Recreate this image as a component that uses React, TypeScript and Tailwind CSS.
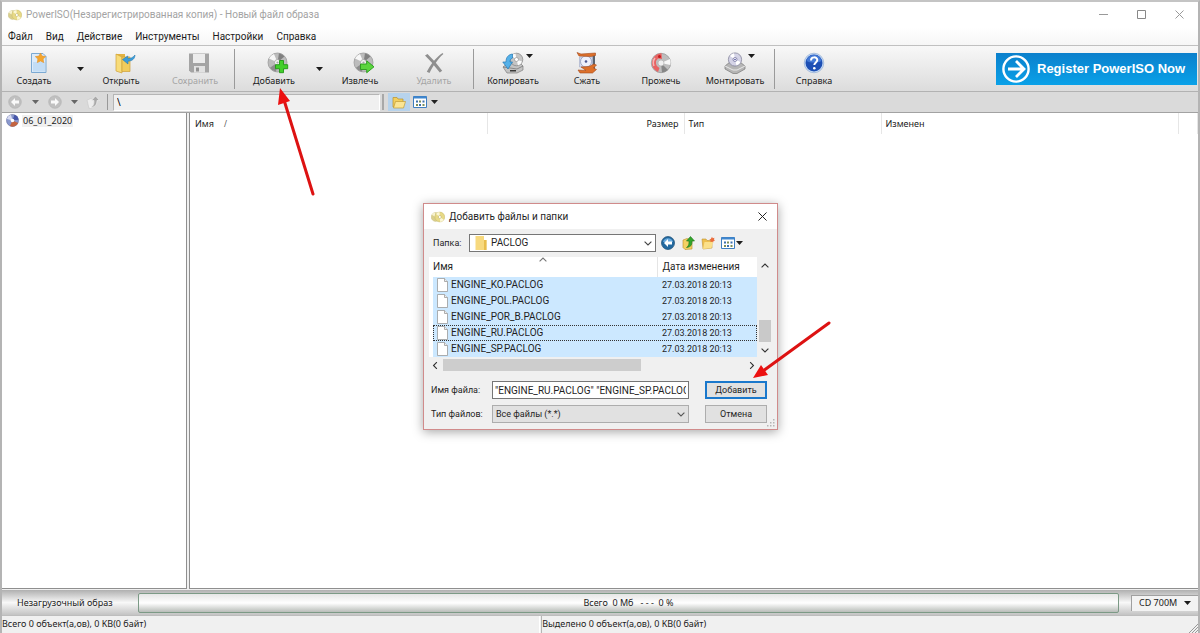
import React from 'react';

const menuItems = ['Файл', 'Вид', 'Действие', 'Инструменты', 'Настройки', 'Справка'];

const files = [
  'ENGINE_KO.PACLOG',
  'ENGINE_POL.PACLOG',
  'ENGINE_POR_B.PACLOG',
  'ENGINE_RU.PACLOG',
  'ENGINE_SP.PACLOG',
];

const Caret: React.FC = () => (
  <svg viewBox="0 0 7 4" className="w-[7px] h-1 shrink-0"><path d="M0 0h7L3.5 4z" fill="currentColor" /></svg>
);

const Chevron: React.FC<{ className?: string }> = ({ className = '' }) => (
  <svg viewBox="0 0 8 5" className={`w-2 h-[5px] shrink-0 ${className}`}>
    <path d="M.6.6 4 4 7.4.6" fill="none" stroke="currentColor" strokeWidth="1.1" />
  </svg>
);

const AppLogo: React.FC = () => (
  <svg viewBox="0 0 14 12" className="w-3.5 h-3 shrink-0">
    <circle cx="4.6" cy="6" r="4.4" fill="#d9cf8c" stroke="#c9be80" strokeWidth=".5" />
    <path d="M4.600 6 .8 3.800A4.400 4.400 0 0 1 4 1.600z" fill="#f7f2cf" />
    <circle cx="8.8" cy="6" r="4.9" fill="#e8da86" stroke="#c4b768" strokeWidth=".5" />
    <path d="M8.8 6 5 3A4.9 4.9 0 0 1 8.5 1.1zM8.8 6l4 2.8a4.9 4.9 0 0 1-3.6 2.1z" fill="#fbf7d6" />
    <circle cx="8.8" cy="6" r="1.5" fill="#fff" stroke="#b5a75a" strokeWidth=".5" />
  </svg>
);

const Disc: React.FC<{ children?: React.ReactNode }> = ({ children }) => (
  <svg viewBox="0 0 22 22" className="w-[22px] h-[22px]">
    <circle cx="10.5" cy="10.5" r="9.5" fill="#bcbcbc" stroke="#9a9a9a" strokeWidth=".8" />
    <path d="M10.5 10.5 2 6.5A9.3 9.3 0 0 1 7 1.9zM10.5 10.5 19 14a9.3 9.3 0 0 1-5 5z" fill="#f7f7f7" />
    <path d="M10.5 10.5 12 1.3a9.3 9.3 0 0 1 5.4 3.3z" fill="#808080" />
    <path d="M10.5 10.5 9 19.7a9.3 9.3 0 0 1-6-4z" fill="#8c8c8c" />
    <circle cx="10.5" cy="10.5" r="3" fill="#f4f4f4" stroke="#929292" strokeWidth=".6" />
    <circle cx="10.5" cy="10.5" r="1.1" fill="#aaa" />
    {children}
  </svg>
);

const icons: Record<string, React.ReactNode> = {
  create: (
    <svg viewBox="0 0 22 22" className="w-[22px] h-[22px]">
      <path d="M4.5 1.5H16l3 3v16H4.5z" fill="#dcebfa" stroke="#7ba9d2" />
      <path d="M6 10h12v9.500H6z" fill="#c3ddf5" />
      <path d="m13.500 1 1.600 3.100 3.600.5-2.600 2.500.6 3.500-3.200-1.600-3.200 1.600.6-3.500-2.600-2.500 3.600-.5z" fill="#f4a52d" stroke="#e0922a" strokeWidth=".6" />
    </svg>
  ),
  open: (
    <svg viewBox="0 0 22 22" className="w-[22px] h-[22px]">
      <path d="M2 2h9v17H2z" fill="#e3b341" />
      <path d="M2 2l6 3v16l-6-2z" fill="#f8dc79" stroke="#cfa03a" strokeWidth=".7" />
      <path d="M8 5h8v14.500H8z" fill="#f2cc5c" stroke="#cfa03a" strokeWidth=".7" />
      <path d="M21 3c-.2 4-3 6-7 6.200V12L8.500 7.500 13.800 4v2.500C17 6.600 19 5.500 21 3z" fill="#3b9ddb" stroke="#267aaf" strokeWidth=".6" />
    </svg>
  ),
  save: (
    <svg viewBox="0 0 22 22" className="w-[22px] h-[22px]">
      <path d="M1 1.500h20v19H3l-2-2z" fill="#a4a4a4" />
      <path d="M5 2h12v9H5z" fill="#ececec" />
      <path d="M6 14h11v6.500H6z" fill="#e2e2e2" />
      <path d="M8 15.500h3v4H8z" fill="#929292" />
    </svg>
  ),
  add: (
    <Disc>
      <path d="M12.500 8.500h4v4.200h4.200v4h-4.200v4h-4v-4H8.500v-4h4z" fill="#43cf2b" stroke="#229617" strokeWidth=".9" />
    </Disc>
  ),
  extract: (
    <Disc>
      <path d="M7.500 12h6.200V8.800l7.300 6-7.300 6V17.500H7.500z" fill="#5bd53e" stroke="#289a1c" strokeWidth=".9" />
    </Disc>
  ),
  remove: (
    <svg viewBox="0 0 22 22" className="w-[22px] h-[22px]">
      <path d="M2 3.500 4.500 2 11 8.800C13.500 5.800 16 3.500 19.500 1l.9 1c-3.200 2.800-5.500 5.500-7.600 8.700l6.400 8-2.400 1.800-6-7.300c-1.600 2.600-3 5-4.300 7.800l-2.700-1.200c1.600-3.200 3.300-6 5.400-8.700z" fill="#8f8f8f" />
    </svg>
  ),
  copy: (
    <svg viewBox="0 0 22 22" className="w-[22px] h-[22px]">
      <path d="m1 15 5-4h12l3 3v4l-6 3H5z" fill="#c3c3c3" stroke="#7e7e7e" strokeWidth=".7" />
      <path d="m1 15 14 2 6-3" fill="none" stroke="#6f6f6f" strokeWidth=".7" />
      <path d="M8 18h6v1.500H8z" fill="#3a3a3a" />
      <circle cx="14.500" cy="7.500" r="6.300" fill="#c4c4c4" stroke="#838383" strokeWidth=".7" />
      <path d="M14.500 7.500 9.500 4a6 6 0 0 1 4-2.600zM14.500 7.500l5.500 2a6 6 0 0 1-4 4z" fill="#fafafa" />
      <circle cx="14.500" cy="7.500" r="2" fill="#fff" stroke="#888" strokeWidth=".6" />
      <path d="M10.500 2C6 2.600 4 5.500 4 10H.8l5.200 7 4.500-7H8c0-2 .7-3.300 2.500-4z" fill="#54b0e8" stroke="#2479b4" strokeWidth=".7" />
    </svg>
  ),
  compress: (
    <svg viewBox="0 0 22 22" className="w-[22px] h-[22px]">
      <path d="M16.500 2h2.500v17h-2.500z" fill="#59636f" />
      <path d="M3.500 5h13v10h-13z" fill="#d3d9ef" stroke="#a0a8c4" strokeWidth=".6" />
      <circle cx="10" cy="9.500" r="5.500" fill="#eef1fc" stroke="#8790b0" strokeWidth=".7" />
      <circle cx="10" cy="9.500" r="1.300" fill="#4b5790" />
      <path d="m1 .500 4 1.500 14.500-1v2.500L15 4.500 3 4z" fill="#dc702b" stroke="#a54a1c" strokeWidth=".6" />
      <path d="m5 15 8-.5 5-2.500 2.500 1-3 3 3 1.500-4 3.500H4L2 18l8 .5z" fill="#dc702b" stroke="#a54a1c" strokeWidth=".6" />
    </svg>
  ),
  burn: (
    <svg viewBox="0 0 22 22" className="w-[22px] h-[22px]">
      <circle cx="11" cy="11" r="9.700" fill="#bdbdbd" stroke="#8f8f8f" strokeWidth=".7" />
      <path d="m11 11 9-4a9.500 9.500 0 0 1 .3 6z" fill="#f7f7f7" />
      <path d="m11 11 7 7a9.500 9.500 0 0 1-6 2.500z" fill="#868686" />
      <path d="M11 1.300A9.700 9.700 0 0 0 8 20l1.500-4A5.500 5.500 0 0 1 8 6.500l4 .5-.5-5.700z" fill="#e86363" />
      <path d="M5 6a8 8 0 0 0-1 8" fill="none" stroke="#f6b5b5" strokeWidth="1.500" />
      <circle cx="11" cy="11" r="3" fill="#efefef" stroke="#aaa" strokeWidth=".6" />
      <circle cx="9.500" cy="4.500" r="1.500" fill="#c21d1d" />
    </svg>
  ),
  mount: (
    <svg viewBox="0 0 22 22" className="w-[22px] h-[22px]">
      <path d="m1 14 5-4h10l5 4v3l-8 4.500h-4L1 17z" fill="#b5b5b5" stroke="#777" strokeWidth=".7" />
      <path d="m1 14 8 4h4l8-4" fill="none" stroke="#eee" strokeWidth=".9" />
      <circle cx="11" cy="7.500" r="6.600" fill="#d4d3e6" stroke="#85859a" strokeWidth=".8" />
      <path d="M11 7.500 6 4a6 6 0 0 1 4-2.700zM11 7.500l5.500 2.500a6 6 0 0 1-4 3.500z" fill="#fff" />
      <circle cx="11" cy="7.500" r="2" fill="#fff" stroke="#7373a0" strokeWidth=".8" />
      <circle cx="11" cy="7.500" r=".8" fill="#45459a" />
    </svg>
  ),
  help: (
    <svg viewBox="0 0 22 22" className="w-[22px] h-[22px]">
      <circle cx="11" cy="11" r="9.800" fill="#c8dcf5" stroke="#88a6d0" strokeWidth=".6" />
      <circle cx="11" cy="11" r="8.500" fill="#1d4fb4" />
      <path d="M3.500 9a7.700 7.700 0 0 1 15 0c-4 2-11 2-15 0z" fill="#4379d6" />
      <path d="M8 8.500c0-4.200 6.300-4 6.300-.4 0 2.400-3 2.400-3 5" fill="none" stroke="#fff" strokeWidth="2" />
      <circle cx="11.300" cy="16.200" r="1.300" fill="#fff" />
    </svg>
  ),
};

interface ToolProps {
  icon: string;
  label: string;
  width?: string;
  indent?: boolean;
  disabled?: boolean;
  menu?: boolean;
}

const Tool: React.FC<ToolProps> = ({ icon, label, width = 'w-[74px]', indent, disabled, menu }) => (
  <button
    type="button"
    disabled={disabled}
    className={`${width} shrink-0 flex flex-col items-center pt-1.5 ${disabled ? 'text-[#a5a5a5]' : 'text-[#1c1c1c]'}`}
  >
    <span className={`relative ${indent ? 'pl-2' : ''}`}>
      {icons[icon]}
      {menu && <span className="absolute left-6 top-0.5 flex"><Caret /></span>}
    </span>
    <span className="text-[9px] leading-3.5 whitespace-nowrap">{label}</span>
  </button>
);

const Separator: React.FC = () => <div className="w-px h-10 mx-0.5 bg-[#9a9a9a] self-center shrink-0" />;

const ViewIcon: React.FC = () => (
  <svg viewBox="0 0 14 12" className="w-3.5 h-3 shrink-0">
    <path d="M.5.500h13v11H.5z" fill="#fff" stroke="#3f7fc0" />
    <path d="M.5.500h13v2H.5z" fill="#3f87cf" />
    <g fill="#3b6fae"><path d="M3 4.500h2v2H3zM9.500 4.500h2v2h-2zM6 8h2v2H6z" /></g>
    <g fill="#7c8f58"><path d="M6 4.500h2v2H6zM3 8h2v2H3zM9.500 8h2v2h-2z" /></g>
  </svg>
);

const NavArrow: React.FC<{ flip?: boolean }> = ({ flip }) => (
  <svg viewBox="0 0 14 14" className={`w-3.5 h-3.5 ${flip ? 'rotate-180' : ''}`}>
    <circle cx="7" cy="7" r="6.300" fill="#c0c0c0" stroke="#b0b0b0" strokeWidth=".6" />
    <path d="M7 3 3 7l4 4V8.500h4v-3H7z" fill="#f9f9f9" />
  </svg>
);

const FileIcon: React.FC = () => (
  <svg viewBox="0 0 11 14" className="w-[11px] h-3.5 shrink-0">
    <path d="M.5.500h7l3 3v10H.5z" fill="#fff" stroke="#9a9a9a" strokeWidth=".8" />
    <path d="M7.500.500v3h3" fill="#eee" stroke="#9a9a9a" strokeWidth=".8" />
  </svg>
);

const AddDialog: React.FC = () => (
  <div
    role="dialog"
    aria-labelledby="dlg-title"
    className="absolute left-[421px] top-[201px] w-[355px] bg-[#f0f0f0] border border-[#d08b8b] shadow-[0_2px_10px_rgba(0,0,0,0.35)] font-['Roboto','Noto_Sans',sans-serif] text-[10px] leading-4 text-[#1f1f1f]"
  >
    <div className="h-[25px] bg-white flex items-center pl-[7px] pr-2">
      <AppLogo />
      <h2 id="dlg-title" className="ml-1 flex-1">Добавить файлы и папки</h2>
      <button type="button" aria-label="Закрыть" className="p-0.5">
        <svg viewBox="0 0 10 10" className="w-[9px] h-[9px]"><path d="m.5.500 9 9m0-9-9 9" stroke="#222" strokeWidth="1.100" /></svg>
      </button>
    </div>

    <div className="flex items-center h-7 pl-[9px]">
      <label htmlFor="folder" className="w-9 shrink-0 text-[9px]">Папка:</label>
      <div className="relative w-[187px]">
        <select id="folder" className="appearance-none block w-full h-[18px] pl-[21px] leading-4 bg-white border border-[#767676]">
          <option>PACLOG</option>
        </select>
        <svg viewBox="0 0 12 14" className="absolute left-1.5 top-0.5 w-3 h-3.5 pointer-events-none">
          <path d="M.5 0H9v4h2.500v10H.5z" fill="#f7d97e" />
          <path d="M9 4h2.500v10H9z" fill="#e8bd4c" />
        </svg>
        <Chevron className="absolute right-1 top-[7px] text-[#444] pointer-events-none" />
      </div>
      <div className="flex items-center gap-1.5 ml-[5px]">
        <button type="button" aria-label="Назад">
          <svg viewBox="0 0 14 14" className="w-3.5 h-3.5">
            <circle cx="7" cy="7" r="6.500" fill="#23699f" stroke="#174a74" strokeWidth=".7" />
            <path d="M2 6a5.200 5.200 0 0 1 10 0z" fill="#68aade" />
            <path d="M7 3 3 7l4 4V8.500h4v-3H7z" fill="#fff" />
          </svg>
        </button>
        <button type="button" aria-label="Вверх">
          <svg viewBox="0 0 14 14" className="w-3.5 h-3.5">
            <path d="m2 4 4-1.500 5 2V13l-7 .5-2-2z" fill="#f3d063" stroke="#b98f27" strokeWidth=".6" />
            <path d="M5.500 11.500C8 10 8 8 8 5H5.500L9.500.500l4 4.500H11c0 4-1 6-5.500 6.500z" fill="#32a52c" stroke="#1c7619" strokeWidth=".6" />
          </svg>
        </button>
        <button type="button" aria-label="Новая папка">
          <svg viewBox="0 0 14 14" className="w-3.5 h-3.5">
            <path d="M1 3h4l1 1.500h5V12l-9 1z" fill="#eebf4e" stroke="#bf9434" strokeWidth=".6" />
            <path d="M3.500 6H12l-1.500 6-8.500 1z" fill="#fbe08a" />
            <path d="m11 .8.8 1.400 1.600-.4-.4 1.600 1 1.100-1.500.6-.3 1.500-1.200-1-1.500.6.100-1.600-1.300-1 1.500-.6z" fill="#ea6c3b" />
          </svg>
        </button>
        <button type="button" aria-label="Вид" className="flex items-center gap-px"><ViewIcon /><Caret /></button>
      </div>
    </div>

    <div className="flex mx-[5px]">
      <div className="w-[328px] bg-white pl-1">
        <table className="w-full table-fixed border-collapse">
          <thead>
            <tr className="h-5">
              <th className="relative font-normal text-left border-r border-[#e5e5e5]">
                Имя
                <Chevron className="absolute left-[106px] top-0 rotate-180 text-[#777]" />
              </th>
              <th className="w-[100px] font-normal text-left pl-[5px]">Дата изменения</th>
            </tr>
          </thead>
          <tbody>
            {files.map(f => (
              <tr
                key={f}
                className={`h-4 bg-[#cce8ff] ${f === 'ENGINE_RU.PACLOG' ? 'outline-1 outline-dotted -outline-offset-1 outline-[#333]' : ''}`}
              >
                <td className="p-0"><div className="flex items-center gap-[3px] pl-1 h-4"><FileIcon />{f}</div></td>
                <td className="p-0 pl-[5px] text-[9px]">27.03.2018 20:13</td>
              </tr>
            ))}
          </tbody>
        </table>
      </div>
      <div className="w-[15px] flex flex-col items-center pt-1.5 pb-1">
        <Chevron className="rotate-180 text-[#333]" />
        <div className="mt-auto mb-1.5 w-3 h-[22px] bg-[#c9c9c9]" />
        <Chevron className="text-[#333]" />
      </div>
    </div>
    <div className="mx-[5px] h-4 flex items-center pl-0.5 pr-4">
      <Chevron className="rotate-90 text-[#333]" />
      <div className="ml-1 w-[198px] h-3 bg-[#cdcdcd]" />
      <Chevron className="ml-auto -rotate-90 text-[#333]" />
    </div>

    <div className="flex flex-col gap-1.5 pl-[7px] pt-2 pb-1.5">
      <div className="flex items-center">
        <label htmlFor="fname" className="w-[61px] text-[9px] whitespace-nowrap">Имя файла:</label>
        <input
          id="fname"
          type="text"
          defaultValue={'"ENGINE_RU.PACLOG" "ENGINE_SP.PACLOG"'}
          className="w-[197px] h-[18px] px-0.5 bg-white border border-[#767676]"
        />
        <button type="button" className="ml-4 w-[62px] h-[18px] leading-3 bg-[#e1e1e1] border-2 border-[#1a78cc] text-[9px]">Добавить</button>
      </div>
      <div className="flex items-center">
        <label htmlFor="ftype" className="w-[61px] text-[9px] whitespace-nowrap">Тип файлов:</label>
        <div className="relative w-[197px]">
          <select id="ftype" className="appearance-none block w-full h-[18px] pl-[3px] leading-4 bg-[#e1e1e1] border border-[#adadad] text-[9px]">
            <option>Все файлы (*.*)</option>
          </select>
          <Chevron className="absolute right-1 top-[7px] text-[#555] pointer-events-none" />
        </div>
        <button type="button" className="ml-4 w-[62px] h-[18px] leading-3 bg-[#e1e1e1] border border-[#adadad] text-[9px]">Отмена</button>
      </div>
    </div>
    <svg viewBox="0 0 8 8" className="absolute right-0.5 bottom-0.5 w-2 h-2" fill="#b5b5b5">
      <path d="M6 0h1.500v1.500H6zM3 3h1.500v1.500H3zM6 3h1.500v1.500H6zM0 6h1.500v1.500H0zM3 6h1.500v1.500H3zM6 6h1.500v1.500H6z" />
    </svg>
  </div>
);

const App: React.FC = () => {
  return (
    <div className="relative h-screen overflow-hidden flex flex-col bg-[#f0f0f0] border-t-2 border-x-2 border-t-[#c4c4c4] border-x-[#b4b4b4] font-['Noto_Sans',sans-serif] text-[9px] text-[#1c1c1c]">
      {/* Title bar */}
      <header className="h-[25px] shrink-0 bg-white flex items-center pl-1.5 pr-3.5 text-[#a3a3a3]">
        <AppLogo />
        <h1 className="ml-1 flex-1 font-['Roboto','Noto_Sans',sans-serif] text-[10px]">
          PowerISO(Незарегистрированная копия) - Новый файл образа
        </h1>
        <div className="flex gap-[29px]">
          <button type="button" aria-label="Свернуть">
            <svg viewBox="0 0 9 9" className="w-[9px] h-[9px]"><path d="M0 4.500h9" stroke="#999" /></svg>
          </button>
          <button type="button" aria-label="Развернуть">
            <svg viewBox="0 0 9 9" className="w-[9px] h-[9px]"><path d="M.5.500h8v8h-8z" fill="none" stroke="#888" /></svg>
          </button>
          <button type="button" aria-label="Закрыть">
            <svg viewBox="0 0 9 9" className="w-[9px] h-[9px]"><path d="m.5.500 8 8m0-8-8 8" stroke="#999" /></svg>
          </button>
        </div>
      </header>

      {/* Menu */}
      <nav className="h-[19px] shrink-0 flex items-center gap-[13px] pl-1.5 bg-linear-to-b from-white to-[#f6f6f6] border-b border-[#c0c0c0] font-['Roboto','Noto_Sans',sans-serif] text-[10px]">
        {menuItems.map(m => <button type="button" key={m}>{m}</button>)}
      </nav>

      {/* Toolbar */}
      <div className="h-[46px] shrink-0 flex bg-linear-to-b from-[#f8f8f8] to-[#dcdcdc] border-b border-[#b2b2b2]">
        <Tool icon="create" label="Создать" width="w-16" indent />
        <button type="button" aria-label="Создать: меню" className="w-[18px] flex items-center justify-end"><Caret /></button>
        <Tool icon="open" label="Открыть" indent />
        <Tool icon="save" label="Сохранить" indent disabled />
        <Separator />
        <Tool icon="add" label="Добавить" indent />
        <button type="button" aria-label="Добавить: меню" className="w-3 flex items-center justify-end"><Caret /></button>
        <Tool icon="extract" label="Извлечь" indent />
        <Tool icon="remove" label="Удалить" disabled />
        <Separator />
        <Tool icon="copy" label="Копировать" menu />
        <Tool icon="compress" label="Сжать" />
        <Tool icon="burn" label="Прожечь" />
        <Tool icon="mount" label="Монтировать" menu />
        <Separator />
        <Tool icon="help" label="Справка" />
        <a
          href="#register"
          className="ml-auto mr-px mt-[7px] w-[201px] h-8 flex items-center pl-1.5 bg-linear-to-b from-[#0b80cc] to-[#0aa1e8] text-white whitespace-nowrap font-['Liberation_Sans',sans-serif] text-[13px] font-bold"
        >
          <svg viewBox="0 0 28 28" className="w-7 h-7 mr-[7px] shrink-0" fill="none" stroke="#fff" strokeWidth="2.400">
            <circle cx="14" cy="14" r="12.600" />
            <path d="M6 14h15.500M14 6l8 8-8 8" strokeWidth="2.800" />
          </svg>
          Register PowerISO Now
        </a>
      </div>

      {/* Address bar */}
      <div className="h-[21px] shrink-0 flex items-center bg-[#dadada] border-b border-[#a2a2a2] text-[#666]">
        <button type="button" aria-label="Назад" className="ml-1.5"><NavArrow /></button>
        <button type="button" aria-label="Назад: история" className="w-[26px] flex justify-center"><Caret /></button>
        <button type="button" aria-label="Вперёд"><NavArrow flip /></button>
        <button type="button" aria-label="Вперёд: история" className="w-6 flex justify-center"><Caret /></button>
        <button type="button" aria-label="Вверх">
          <svg viewBox="0 0 14 14" className="w-3.5 h-3.5">
            <path d="m1 5 4-1.500 3 2V12l-5 1.500z" fill="#ededed" stroke="#c2c2c2" strokeWidth=".5" />
            <path d="M4 12.500c4-1.500 4-4 4-7H5.500L9.500 1l4 4.500H11c0 4-2 7-7 7z" fill="#a9a9a9" stroke="#f3f3f3" strokeWidth=".6" />
          </svg>
        </button>
        <div className="w-px h-4 ml-[7px] bg-[#999]" />
        <input
          type="text"
          aria-label="Путь"
          defaultValue="\"
          className="ml-[5px] w-[267px] h-[17px] px-[3px] bg-[#f0f0f0] border border-[#b5b5b5] border-b-white border-r-white text-[10px] text-black"
        />
        <div className="w-0.5 h-4 mx-0.5 bg-[#a8a8a8]" />
        <button type="button" aria-label="Папки" className="ml-0.5 w-[22px] h-[18px] flex items-center justify-center bg-[#b7d3ec]">
          <svg viewBox="0 0 14 13" className="w-3.5 h-[13px]">
            <path d="M1 1.500h4l1 1.500h5v8H1z" fill="#f2cf5d" stroke="#b9912d" strokeWidth=".7" />
            <path d="M3.500 5.500h10l-2 6.500H1.500z" fill="#fbe593" stroke="#c29b35" strokeWidth=".7" />
          </svg>
        </button>
        <button type="button" aria-label="Вид" className="ml-[3px] flex items-center gap-1 text-[#222]"><ViewIcon /><Caret /></button>
      </div>

      {/* Image tree and file list */}
      <main className="flex-1 min-h-0 flex gap-0.5 pb-px">
        <aside className="w-[185px] shrink-0 bg-white border-r border-b border-[#8f8f8f] pt-px pl-1">
          <div className="flex items-center text-[9px] leading-3">
            <svg viewBox="0 0 13 13" className="w-[13px] h-[13px] mr-[3px]">
              <circle cx="6.500" cy="6.500" r="6" fill="#8998ce" stroke="#626a9a" strokeWidth=".6" />
              <path d="M6.500 6.500.800 5A6 6 0 0 1 5 .7z" fill="#d8dcf3" />
              <path d="M6.500 6.500 12.200 9A6 6 0 0 1 4 12z" fill="#c46440" />
              <path d="m6.500 6.500 2-5.700a6 6 0 0 1 4 5z" fill="#4656a8" />
              <circle cx="6.500" cy="6.500" r="1.800" fill="#fff" />
            </svg>
            <span className="bg-[#f0f0f0] px-px">06_01_2020</span>
          </div>
        </aside>
        <section className="flex-1 bg-white border-l border-b border-[#8f8f8f]">
          <table className="w-full table-fixed border-collapse">
            <thead>
              <tr className="h-[21px] *:font-normal *:border-r *:border-[#e6e6e6]">
                <th className="w-[297px] text-left pl-[5px]">Имя<span className="ml-2.5 text-[8px] text-[#555]">/</span></th>
                <th className="w-[197px] text-right pr-[5px]">Размер</th>
                <th className="w-[197px] text-left pl-1">Тип</th>
                <th className="text-left pl-1">Изменен</th>
                <th className="w-[19px]" />
              </tr>
            </thead>
          </table>
        </section>
      </main>

      {/* Capacity bar */}
      <div className="h-[25px] shrink-0 flex items-center bg-linear-to-b from-[#b0b0b0] via-[#f8f8f8] to-[#c3c3c3]">
        <div className="w-[136px] shrink-0 pl-[15px]">Незагрузочный образ</div>
        <div className="flex-1 h-5 flex items-center justify-center rounded-[2px] border border-[#7c9a86] bg-linear-to-b from-[#e6e6e6] via-white to-[#b9bdb9] whitespace-pre">
          Всего  0 Мб   - - -  0 %
        </div>
        <div className="relative ml-3 w-[67px] shrink-0">
          <select aria-label="Размер диска" className="appearance-none block w-full h-4 pl-[7px] leading-3 bg-[#f3f3f3] border-l border-t border-[#a0a0a0]">
            <option>CD 700M</option>
          </select>
          <span className="absolute right-[7px] top-1.5 flex pointer-events-none"><Caret /></span>
        </div>
      </div>

      {/* Status bar */}
      <footer className="h-[18px] shrink-0 flex gap-px border-t border-[#bdbdbd]">
        <div className="w-[45%] border-r border-white leading-4">Всего 0 объект(а,ов), 0 KB(0 байт)</div>
        <div className="flex-1 border-l border-[#b5b5b5] leading-4">Выделено 0 объект(а,ов), 0 KB(0 байт)</div>
        <svg viewBox="0 0 10 10" className="w-2.5 h-2.5 self-end" stroke="#999"><path d="M1 10l9-9M4 10l6-6M7 10l3-3" /></svg>
      </footer>

      <AddDialog />

      {/* Pointer arrows */}
      <svg viewBox="0 0 1200 633" className="absolute -left-0.5 -top-0.5 w-[1200px] h-[633px] pointer-events-none" fill="#ec1010" stroke="#dd1212">
        <path d="M313 194 284 100M829 323l-66 48" strokeWidth="3" strokeLinecap="round" />
        <path d="m280 88 10 13-12 4zM753 378l8-13 7 10z" stroke="none" />
      </svg>
    </div>
  );
};

export default App;
